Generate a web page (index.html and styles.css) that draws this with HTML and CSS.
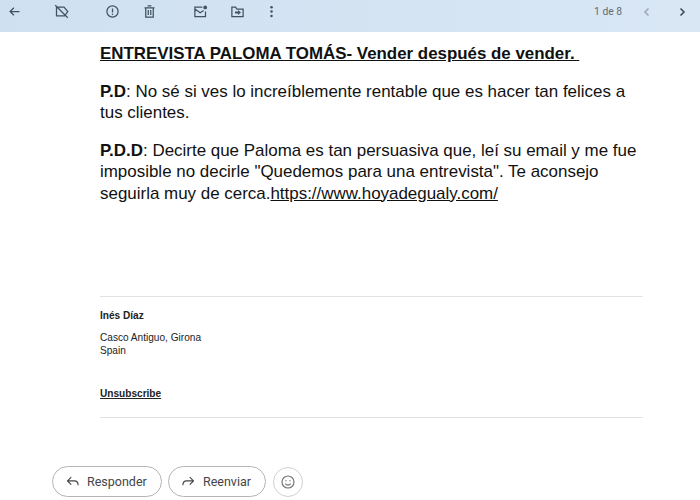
FILE: index.html
```html
<!DOCTYPE html>
<html lang="es">
<head>
<meta charset="utf-8">
<title>Correo</title>
<link rel="stylesheet" href="styles.css">
</head>
<body>
<div class="toolbar">
  <svg class="icon back" viewBox="0 0 24 24"><path d="M20 12H5M11 6l-6 6 6 6"/></svg>
  <svg class="icon snooze" viewBox="0 0 24 24"><path d="M4 5h12l6 7-5 7H4zM2 2l20 20"/></svg>
  <svg class="icon spam" viewBox="0 0 24 24"><circle cx="12" cy="12" r="9"/><path d="M12 7v6.500M12 15.500V17.500"/></svg>
  <svg class="icon trash" viewBox="0 0 24 24"><path d="M6 6h12v15H6zM4 6h16M9 3h6M10 9.500v8M14 9.500v8"/></svg>
  <svg class="icon mail" viewBox="0 0 24 24"><path d="M15 5H3v15h17v-8M3 8l8.500 6L17 10.500"/><circle cx="19.500" cy="5.500" r="3" class="fill"/></svg>
  <svg class="icon move" viewBox="0 0 24 24"><path d="M3 5h6l2 3h10v12H3z"/><path class="fill" d="M8 12h5V9.500l4.500 4-4.500 4V15H8z"/></svg>
  <svg class="icon more" viewBox="0 0 24 24"><circle cx="12" cy="5" r="2" class="fill"/><circle cx="12" cy="12" r="2" class="fill"/><circle cx="12" cy="19" r="2" class="fill"/></svg>
  <span class="count">1 de 8</span>
  <svg class="icon chev prev" viewBox="0 0 24 24"><path d="M15 5l-7 7 7 7"/></svg>
  <svg class="icon chev next" viewBox="0 0 24 24"><path d="M9 5l7 7-7 7"/></svg>
</div>
<main class="message">
  <p class="headline">ENTREVISTA PALOMA TOMÁS- Vender después de vender.&nbsp;</p>
  <p class="para"><b>P.D</b>: No sé si ves lo increíblemente rentable que es hacer tan felices a tus clientes.</p>
  <p class="para"><b>P.D.D</b>: Decirte que Paloma es tan persuasiva que, leí su email y me fue imposible no decirle "Quedemos para una entrevista". Te aconsejo seguirla muy de cerca.<a class="link" href="#">https://www.hoyadegualy.com/</a></p>
  <div class="footer">
    <p class="name">Inés Díaz</p>
    <p class="address">Casco Antiguo, Girona<br>Spain</p>
    <a class="unsub" href="#">Unsubscribe</a>
  </div>
</main>
<div class="actions">
  <button class="pill reply"><svg class="btn-icon" viewBox="0 0 24 24"><path d="M21 18c0-4-2-7-6-7H4M10 5l-6 6 6 6"/></svg>Responder</button>
  <button class="pill forward"><svg class="btn-icon" viewBox="0 0 24 24"><path d="M3 18c0-4 2-7 6-7h11M14 5l6 6-6 6"/></svg>Reenviar</button>
  <button class="emoji"><svg class="btn-icon smile" viewBox="0 0 24 24"><circle cx="12" cy="12" r="9"/><path d="M8 14.500c1 1.500 2.300 2.200 4 2.200s3-.7 4-2.200"/><circle cx="9" cy="10" r="1" class="fill"/><circle cx="15" cy="10" r="1" class="fill"/></svg></button>
</div>
</body>
</html>
```
FILE: styles.css
```css
* { box-sizing: border-box; }
html, body { margin: 0; padding: 0; }
body {
  width: 700px;
  height: 500px;
  overflow: hidden;
  background: #fff;
  font-family: "Liberation Sans", Arial, sans-serif;
  color: #111;
  display: flex;
  flex-direction: column;
}
.toolbar {
  height: 32px;
  flex: none;
  background: linear-gradient(90deg, #cfe0f0, #d9e7f5);
  display: flex;
  align-items: center;
  padding-left: 7px;
  padding-bottom: 9px;
}
.icon {
  width: 15px;
  height: 15px;
  flex: none;
  fill: none;
  stroke: #44525f;
  stroke-width: 2;
}
.fill { fill: #44525f; stroke: none; }
.snooze { margin-left: 32px; }
.spam { margin-left: 36px; }
.trash { margin-left: 22px; }
.mail { margin-left: 36px; }
.move { margin-left: 22px; }
.more { margin-left: 19px; }
.count {
  margin-left: auto;
  font: 10.300px "Roboto", sans-serif;
  color: #5f6b76;
}
.chev { width: 12px; height: 12px; stroke-width: 3; }
.prev { margin-left: 19px; stroke: #9aa6b2; }
.next { margin-left: 23px; margin-right: 12px; stroke: #3c4650; }
.message {
  flex: 1;
  padding: 11px 57px 0 100px;
  font-size: 16.950px;
  line-height: 21.500px;
  color: #111;
}
.message p { margin: 0; }
.headline { font-weight: bold; text-decoration: underline; font-size: 16.900px; }
.message .para { margin-top: 16px; }
.link { color: #111; text-decoration: underline; }
.footer {
  margin-top: 92px;
  border-top: 1px solid #e2e2e2;
  border-bottom: 1px solid #e2e2e2;
  height: 122px;
  padding-top: 12px;
  font-size: 10.100px;
  line-height: 13px;
  color: #222;
}
.message .name { font-weight: bold; }
.message .address { margin-top: 9px; }
.unsub {
  display: block;
  margin-top: 30px;
  font-weight: bold;
  color: #222;
  text-decoration: underline;
}
.actions {
  flex: none;
  display: flex;
  align-items: center;
  gap: 6px;
  padding: 0 0 0 52px;
  height: 37px;
}
.pill, .emoji {
  background: #fff;
  border: 1px solid #b4b4b4;
  border-radius: 16px;
  height: 31px;
  display: flex;
  align-items: center;
  padding: 0;
  font: 12.500px "Roboto", sans-serif;
  color: #444;
}
.reply { width: 110px; padding-left: 12px; }
.forward { width: 98px; padding-left: 12px; }
.emoji { width: 30px; height: 30px; margin-left: 1px; justify-content: center; border-color: #d0d0d0; }
.btn-icon {
  width: 15px;
  height: 15px;
  margin-right: 7px;
  fill: none;
  stroke: #444;
  stroke-width: 1.800;
}
.smile { margin-right: 0; stroke: #777; width: 16px; height: 16px; }
.smile .fill { fill: #777; }
```
